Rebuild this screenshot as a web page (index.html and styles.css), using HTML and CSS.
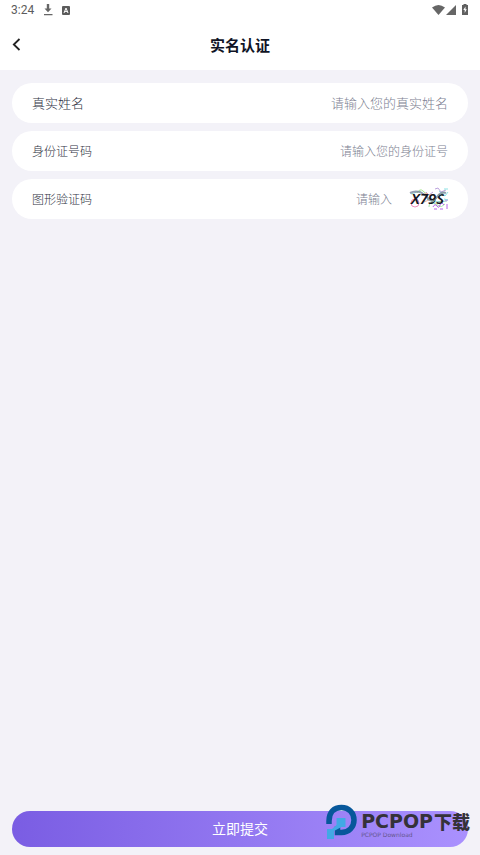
FILE: index.html
```html
<!DOCTYPE html>
<html lang="zh-CN">
<head>
<meta charset="utf-8">
<meta name="viewport" content="width=device-width, initial-scale=1">
<title>实名认证</title>
<link rel="stylesheet" href="styles.css">
</head>
<body>
<div class="status">
  <div class="status-group">
    <span class="clock">3:24</span>
    <svg class="download" width="10" height="12" viewBox="0 0 10 12"><path d="M3.800 0h2.400v4.500h2.300L5 8.300 1.500 4.500h2.300zM1 10h8.500v1.300H1z" fill="#666"/></svg>
    <svg width="8" height="9" viewBox="0 0 8 9"><rect width="8" height="9" rx="1" fill="#5c5c5c"/><path d="M2 7l2-5 2 5M2.700 5.400h2.600" fill="none" stroke="#fff"/></svg>
  </div>
  <div class="status-group signals">
    <svg width="13" height="10" viewBox="0 0 13 10"><path d="M0 2.500Q6.500-2.500 13 2.500L6.500 10z" fill="#666"/></svg>
    <svg width="10" height="10" viewBox="0 0 10 10"><path d="M10 0v10H0z" fill="#666"/></svg>
    <svg class="battery" width="6" height="11" viewBox="0 0 6 11"><path d="M1.500 1V0h3v1H6v10H0V1z" fill="#606060"/><path d="M3.500 2.500L1.300 6h1.400v3L4.800 5.300H3.500z" fill="#fff"/></svg>
  </div>
</div>
<header class="bar">
  <button class="back" type="button" aria-label="返回"><svg width="9" height="13" viewBox="0 0 9 13"><path d="M7.500 1L1.800 6.500 7.500 12" fill="none" stroke="#222" stroke-width="1.800"/></svg></button>
  <h1>实名认证</h1>
</header>
<form class="form">
  <div class="field field-name">
    <label for="name">真实姓名</label>
    <input id="name" type="text" placeholder="请输入您的真实姓名">
  </div>
  <div class="field">
    <label for="idno">身份证号码</label>
    <input id="idno" type="text" placeholder="请输入您的身份证号">
  </div>
  <div class="field">
    <label for="code">图形验证码</label>
    <input id="code" type="text" placeholder="请输入">
    <svg class="captcha" width="40" height="24" viewBox="0 0 40 24">
      <g fill="none" stroke-width="1">
        <path d="M2 7l9-3 6 5 8 6 13-1" stroke="#8ecfc6"/>
        <path d="M8 6q3-5 6-2t3 2" stroke="#a4e68a"/>
        <circle cx="6" cy="16" r="4" stroke="#ef8fbd"/>
        <path d="M17 5l3 3 4-3M26 2l3-1 3 4 5-2" stroke="#bca3dd"/>
        <path d="M20 20q0-5 4-4t6 3 6-2" stroke="#a6e6ac"/>
        <path d="M24 20q2-4 4-1t3-1 4 0M25 22h3m3 0h3m2-9h3m-1 4v5" stroke="#b964ea"/>
        <path d="M30 4l6 5 3-4m-4 7l4 1M35 2h4" stroke="#8be3e3"/>
        <path d="M14 8q5-5 8 4M15 15l5-2" stroke="#f0b59a"/>
      </g>
      <path d="M1 6q8-4 16 3 5 8 11 1 4-6 9-4" fill="none" stroke="#7c8aa3" stroke-width="2" opacity=".8"/>
      <text x="2" y="17" class="captcha-text">X79S</text>
      <path d="M18 12l6 3 6-7 6-3" fill="none" stroke="#84a2a0"/>
    </svg>
  </div>
  <div class="actions">
    <button class="submit" type="submit">立即提交</button>
    <div class="mark">
      <svg width="32" height="36" viewBox="0 0 32 36">
        <path d="M3 20v-3C3 8 8 3.500 15.500 3.500S28 9 28 16 23 28.500 15.500 28.500h-4v-6" fill="none" stroke="#07579b" stroke-width="5.500"/>
        <path d="M10.500 14h9v9h-4l-7.500 4v8H1V25h5l4.500-4z" fill="#42a9e5"/>
      </svg>
      <div class="mark-words">
        <div class="mark-title"><span class="mark-latin">PCPOP</span><span>下载</span></div>
        <div class="mark-sub">PCPOP Download</div>
      </div>
    </div>
  </div>
</form>
</body>
</html>
```
FILE: styles.css
```css
* { box-sizing: border-box; }
body {
  margin: 0;
  min-height: 100vh;
  display: flex;
  flex-direction: column;
  background: #f3f2f8;
  font-family: "Noto Sans CJK SC", sans-serif;
  font-weight: 300;
}
svg { display: block; flex: none; }
.status {
  display: flex;
  justify-content: space-between;
  height: 20px;
  padding: 0 12px 0 11px;
  background: #fff;
}
.status-group { display: flex; align-items: center; }
.clock { font: 12px/20px Roboto, sans-serif; color: #5c5c5c; }
.download { margin: 0 9px; }
.signals { gap: 1px; padding-bottom: 1px; }
.battery { margin-left: 5px; }
.bar {
  display: grid;
  grid-template-columns: 40px 1fr 40px;
  align-items: center;
  height: 50px;
  padding-bottom: 1px;
  background: #fff;
}
.back {
  height: 40px;
  padding: 0 0 0 12px;
  border: 0;
  background: none;
}
h1 {
  margin: 0;
  text-align: center;
  font-size: 15px;
  line-height: 20px;
  font-weight: 700;
  color: #101426;
}
.form {
  flex: 1;
  display: flex;
  flex-direction: column;
  gap: 8px;
  padding: 13px 12px 8px;
}
.field {
  display: flex;
  align-items: center;
  height: 40px;
  padding: 0 20px;
  border-radius: 20px;
  background: #fff;
  font-size: 12px;
  line-height: 18px;
  color: #303344;
}
.field-name { font-size: 13px; }
.field input {
  flex: 1;
  min-width: 0;
  height: 18px;
  padding: 0;
  border: 0;
  outline: 0;
  background: none;
  font: inherit;
  text-align: right;
}
.field input::placeholder { color: #7d7f92; opacity: 1; }
.captcha { margin: 0 -1px 0 17px; }
.captcha-text {
  font: italic 600 15px "Noto Sans", sans-serif;
  fill: #151720;
}
.actions { position: relative; margin-top: auto; }
.submit {
  display: block;
  width: 100%;
  height: 36px;
  padding: 0 0 3px;
  border: 0;
  border-radius: 18px;
  background: linear-gradient(90deg, #7a5de3, #aa91fe);
  font: 400 14px/20px "Noto Sans CJK SC", sans-serif;
  color: #fff;
}
.mark {
  position: absolute;
  right: -2px;
  bottom: 7px;
  display: flex;
  gap: 3px;
  pointer-events: none;
}
.mark-words { padding-top: 8px; }
.mark-title {
  display: flex;
  align-items: center;
  gap: 1px;
  font: 900 18px/18px "Noto Sans CJK SC", sans-serif;
  color: #353239;
}
.mark-latin { font: 700 19px/18px "DejaVu Sans", sans-serif; }
.mark-sub {
  padding-top: 1px;
  font: 6px/8px "DejaVu Sans", sans-serif;
  color: #65568f;
}
```
